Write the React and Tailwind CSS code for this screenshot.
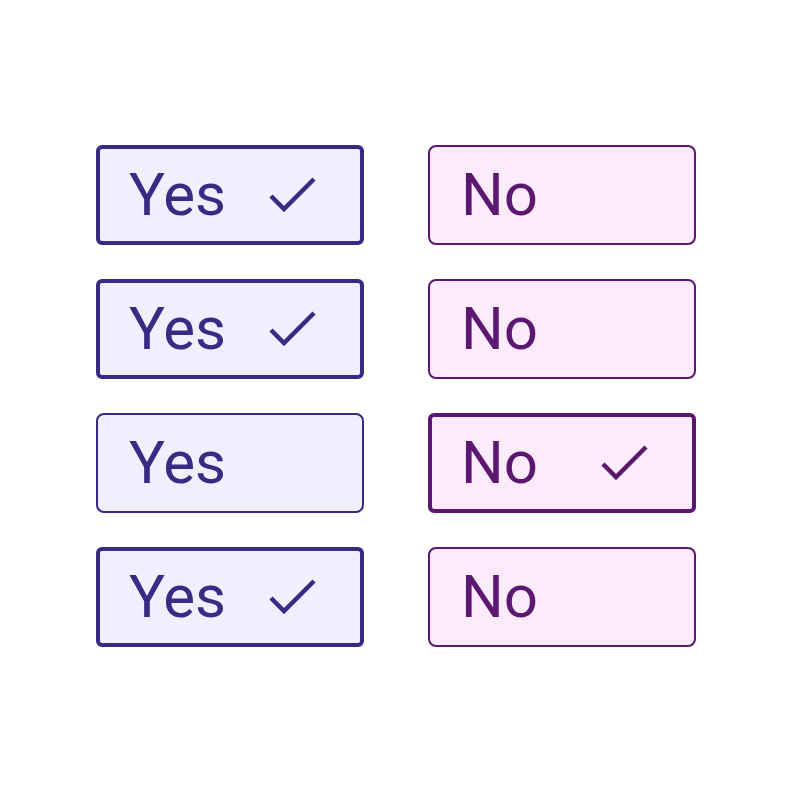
import React from 'react';

const rows = [
  { yes: true, no: false },
  { yes: true, no: false },
  { yes: false, no: true },
  { yes: true, no: false },
];

function Check({ color }) {
  return (
    <svg width="50" height="40" viewBox="0 0 50 40" fill="none" className="ml-auto shrink-0">
      <polyline points="4,21 17,34 47,4" stroke={color} strokeWidth="4.5" strokeLinecap="butt" strokeLinejoin="miter" />
    </svg>
  );
}

function Choice({ label, selected, tone }) {
  const yes = tone === 'yes';
  const base = yes ? 'bg-[#f1eefe] text-[#3b2a84]' : 'bg-[#fbebfd] text-[#5c1870]';
  const border = selected
    ? yes
      ? 'border-4 border-[#3b2a84] rounded-[6px] pl-[29px] pr-[43px]'
      : 'border-4 border-[#5c1870] rounded-[6px] pl-[29px] pr-[43px]'
    : yes
      ? 'border-2 border-[#3b2a84] rounded-[8px] pl-[31px] pr-[45px]'
      : 'border-2 border-[#5c1870] rounded-[8px] pl-[31px] pr-[45px]';
  return (
    <div className={`h-[100px] flex items-center ${base} ${border}`}>
      <span className="text-[60px] leading-none" style={{ fontFamily: 'Roboto, sans-serif' }}>{label}</span>
      {selected && <Check color={yes ? '#3b2a84' : '#5c1870'} />}
    </div>
  );
}

export default function App() {
  return (
    <div className="w-[792px] h-[791px] bg-white flex items-center justify-center">
      <div className="w-[600px] grid grid-cols-2 gap-x-[64px] gap-y-[34px]">
        {rows.map((r, i) => (
          <React.Fragment key={i}>
            <Choice label="Yes" selected={r.yes} tone="yes" />
            <Choice label="No" selected={r.no} tone="no" />
          </React.Fragment>
        ))}
      </div>
    </div>
  );
}
